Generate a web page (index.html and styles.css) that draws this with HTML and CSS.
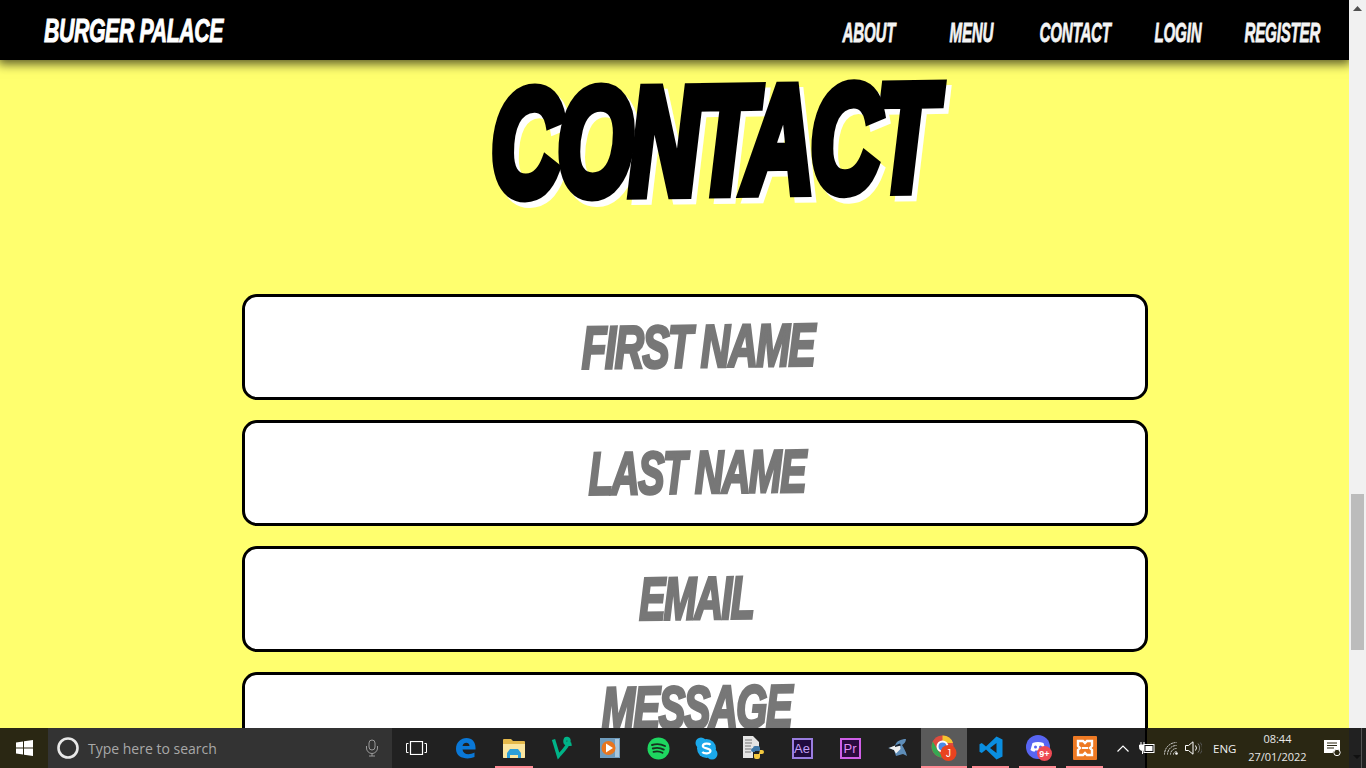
FILE: index.html
```html
<!DOCTYPE html>
<html lang="en">
<head>
<meta charset="utf-8">
<title>Burger Palace - Contact</title>
<link rel="stylesheet" href="styles.css">
</head>
<body>
<div class="desktop">
  <div class="browser">
    <div class="page">
      <header class="topbar">
        <a class="brand"><span class="brand-text">BURGER PALACE</span></a>
        <nav class="nav">
          <a class="nav-link nav-about"><span>ABOUT</span></a>
          <a class="nav-link nav-menu"><span>MENU</span></a>
          <a class="nav-link nav-contact"><span>CONTACT</span></a>
          <a class="nav-link nav-login"><span>LOGIN</span></a>
          <a class="nav-link nav-register"><span>REGISTER</span></a>
        </nav>
      </header>
      <main class="content">
        <h1 class="title"><span data-text="CONTACT">CONTACT</span></h1>
        <form class="form">
          <div class="field"><span class="hint hint-first">FIRST NAME</span></div>
          <div class="field"><span class="hint hint-last">LAST NAME</span></div>
          <div class="field"><span class="hint hint-email">EMAIL</span></div>
          <div class="field field-message"><span class="hint hint-message">MESSAGE</span></div>
        </form>
      </main>
    </div>
    <div class="scrollbar">
      <div class="scroll-arrow"><svg width="9" height="5" viewBox="0 0 9 5"><path d="M4.5 0 9 5H0z" fill="#505050"/></svg></div>
      <div class="scroll-track"><div class="scroll-thumb"></div></div>
    </div>
  </div>
  <footer class="taskbar">
    <div class="start">
      <svg width="17" height="16" viewBox="0 0 17 16"><path d="M0 2.4 7 1.4V7.5H0zM8 1.2 17 0V7.5H8zM0 8.5H7V14.6L0 13.6zM8 8.5H17V16L8 14.8z" fill="#fff"/></svg>
    </div>
    <div class="search">
      <svg class="cortana" width="24" height="24" viewBox="0 0 24 24"><circle cx="12" cy="12" r="9.5" fill="none" stroke="#e8e8e8" stroke-width="2.6"/></svg>
      <span class="search-text">Type here to search</span>
      <svg class="mic" width="14" height="18" viewBox="0 0 14 18"><rect x="4" y="1" width="6" height="10" rx="3" fill="none" stroke="#9a9a9a"/><path d="M1.5 7v2a5.5 5.5 0 0 0 11 0V7M7 14.500V17M4 17h6" fill="none" stroke="#9a9a9a"/></svg>
    </div>
    <div class="taskview">
      <svg width="21" height="14" viewBox="0 0 21 14"><rect x="4.500" y="0.500" width="12" height="13" fill="none" stroke="#fff" stroke-width="1.200"/><path d="M2.500 2.500H.5v9h2M18.500 2.500h2v9h-2" fill="none" stroke="#fff"/></svg>
    </div>
    <div class="apps">
      <div class="app"><svg width="20" height="22" viewBox="0 0 20 22"><path d="M0 12C0 5 5 1 10.500 1 16.500 1 20 5.500 19.500 12.500H6.500C7 17.500 13 18.500 18.500 15.500V20C11.500 23 0 21.500 0 12ZM6.500 9H13.500C13.500 5 7.500 4.500 6.500 9Z" fill="#0a78d7"/></svg></div>
      <div class="app running"><svg width="22" height="20" viewBox="0 0 22 20"><path d="M0 2a1 1 0 0 1 1-1h7l2 2h11a1 1 0 0 1 1 1v15a1 1 0 0 1-1 1H1a1 1 0 0 1-1-1z" fill="#e5b94b"/><path d="M0 6h22v13a1 1 0 0 1-1 1H1a1 1 0 0 1-1-1z" fill="#fbe6a0"/><path d="M4 15 7 11H15L18 15V20H15V17H7V20H4z" fill="#2d9fd9"/></svg></div>
      <div class="app"><svg width="22" height="24" viewBox="0 0 22 24"><path d="M2.500 3.500 7.500 20C12 15 18 9 18 5 18 2 14.500 1.500 14 4.500 13.500 8 16 9 20.500 8" fill="none" stroke="#00b488" stroke-width="3.400"/></svg></div>
      <div class="app"><svg width="20" height="20" viewBox="0 0 20 20"><rect width="20" height="20" fill="#6f9cbd"/><rect x="15" y="1" width="4" height="18" fill="#a9c7dc"/><circle cx="8.500" cy="10" r="7" fill="#e8761e"/><path d="M6 5.500 13 10 6 14.500z" fill="#fff"/></svg></div>
      <div class="app"><svg width="23" height="23" viewBox="0 0 23 23"><circle cx="11.500" cy="11.500" r="11" fill="#1ed760"/><path d="M5 8C9 6.700 14 7 18 9M5.800 11.500C9.500 10.500 13.500 10.800 16.800 12.600M6.500 14.800C9.800 14 12.800 14.200 15.500 15.800" fill="none" stroke="#17321f" stroke-width="1.900" stroke-linecap="round"/></svg></div>
      <div class="app"><svg width="23" height="23" viewBox="0 0 23 23"><circle cx="6" cy="6" r="5.500" fill="#1ba8ea"/><circle cx="17" cy="17" r="5.500" fill="#1ba8ea"/><circle cx="11.500" cy="11.500" r="9.500" fill="#1ba8ea"/><path d="M15.500 7.800C14 6.300 8 6 7.800 9 7.800 12 15.500 10.800 15.500 14 15.300 17 9 16.800 7.300 15" fill="none" stroke="#fff" stroke-width="2.200"/></svg></div>
      <div class="app"><svg width="24" height="24" viewBox="0 0 24 24"><path d="M1 0H11L17 6V14H11V22H1z" fill="#e4e4e4"/><path d="M3 4H10M3 7H10M3 10H9M3 13H9M3 16H9" stroke="#777" stroke-width="1.200"/><path d="M11 12a2 2 0 0 1 2-2h3a2 2 0 0 1 2 2v3h-5v1h-2a2 2 0 0 1 0-4z" fill="#3f78a8"/><path d="M18 14h2a2 2 0 0 1 2 2 2 2 0 0 1-2 2h-2v3a2 2 0 0 1-2 2h-2a2 2 0 0 1-2-2v-3h5z" fill="#f4c93f"/></svg></div>
      <div class="app"><div class="adobe adobe-ae"><span>Ae</span></div></div>
      <div class="app"><div class="adobe adobe-pr"><span>Pr</span></div></div>
      <div class="app app-jay"><svg width="22" height="20" viewBox="0 0 22 20"><path d="M19 1C14 1 9 3 8 8L1 10 7 12 9 18 16 16 20 18C19 13 16 9 15 7 17 6 19 4 19 1Z" fill="#5e8db8"/><path d="M2 10 8 7.500 13 7 13.500 11 9 15.500 7 12z" fill="#f2f2f2"/><path d="M8 7.500 13 5.500 14 7.500 8 9z" fill="#16202c"/></svg></div>
      <div class="app running active"><svg width="26" height="26" viewBox="0 0 26 26"><circle cx="11.500" cy="11.500" r="11" fill="#dd4b3e"/><path d="M11.500.5A11 11 0 0 1 22 8H11.500z" fill="#f4c430"/><path d="M1.800 6.500 7 15.500 12 22.500A11 11 0 0 1 1.800 6.500z" fill="#36a853"/><circle cx="11.500" cy="11.500" r="5" fill="#4a8be8" stroke="#fff" stroke-width="2"/><circle cx="17.500" cy="18" r="8" fill="#e8431f"/><text class="chrome-badge" x="17.500" y="21.500">J</text></svg></div>
      <div class="app running"><svg width="24" height="24" viewBox="0 0 24 24"><path d="M17.500 0.500 23.500 3.500V20.500L17.500 23.500 7 13.500 2.800 17 .5 15.800V8.200L2.800 7 7 10.500zM17.500 7 11 12 17.500 17z" fill="#0a8ee0"/></svg></div>
      <div class="app running app-discord"><svg width="27" height="26" viewBox="0 0 27 26"><circle cx="12" cy="12" r="12" fill="#5865f2"/><path d="M6.500 8C10 6.500 14 6.500 17.500 8L19.500 15C18 16 17 16.500 15.500 16.700L14.800 15.500H9.200L8.500 16.700C7 16.500 6 16 4.500 15Z" fill="#fff"/><circle cx="9.500" cy="12" r="1.500" fill="#5865f2"/><circle cx="14.500" cy="12" r="1.500" fill="#5865f2"/><circle cx="18.500" cy="18.500" r="7.500" fill="#ee4a54"/><text class="discord-badge" x="18.500" y="21.500">9+</text></svg></div>
      <div class="app running"><svg width="24" height="24" viewBox="0 0 24 24"><rect width="24" height="24" rx="1" fill="#ee7a24"/><path d="M5 5H10L12 7 14 5H19V10L17 12 19 14V19H14L12 17 10 19H5V14L7 12 5 10z" fill="none" stroke="#fff" stroke-width="2.400"/><path d="M9 12H15" stroke="#fff" stroke-width="2"/></svg></div>
    </div>
    <div class="chevron"><svg width="12" height="7" viewBox="0 0 12 7"><path d="M.5 6.500 6 1l5.500 5.500" fill="none" stroke="#fff" stroke-width="1.200"/></svg></div>
    <div class="tray">
      <svg class="tray-power" width="17" height="12" viewBox="0 0 17 12"><path d="M3 0v3M6 0v3M1.500 3h6v2.500a3 3 0 0 1-6 0zM4.500 8.500V12" stroke="#fff" fill="#fff" stroke-width="1"/><rect x="6" y="2.500" width="10" height="8" fill="#111" stroke="#fff"/><rect x="7.500" y="4" width="7" height="5" fill="#fff"/></svg>
      <svg class="tray-wifi" width="15" height="13" viewBox="0 0 15 13"><path d="M.5 12.500A12 12 0 0 1 12.500 .5M3.500 12.500A9 9 0 0 1 12.500 3.500M6.500 12.500A6 6 0 0 1 12.500 6.500M9.500 12.500A3 3 0 0 1 12.500 9.500" fill="none" stroke="#d8d8d8" stroke-dasharray="2 .6"/><circle cx="12.500" cy="11.500" r="1.300" fill="#fff"/></svg>
      <svg class="tray-sound" width="17" height="14" viewBox="0 0 17 14"><path d="M.5 4.500H3.500L8 .8V13.200L3.500 9.500H.5z" fill="none" stroke="#fff"/><path d="M10.500 4.500A4 4 0 0 1 10.500 9.500" fill="none" stroke="#fff"/><path d="M13 2.500A7 7 0 0 1 13 11.500" fill="none" stroke="#888"/><path d="M15.300 1.500A9 9 0 0 1 15.300 12.500" fill="none" stroke="#555"/></svg>
      <span class="tray-lang">ENG</span>
      <div class="clock"><span>08:44</span><span>27/01/2022</span></div>
      <svg class="tray-notify" width="17" height="16" viewBox="0 0 17 16"><path d="M0 0H16V11H10L8.500 13H0z" fill="#fff"/><path d="M3 3H13M3 5.500H13M3 8H10" stroke="#2a2713"/><circle cx="13" cy="12.500" r="3.200" fill="#2a2713" stroke="#fff"/></svg>
    </div>
    <div class="tray-end"><div class="tray-arrow"></div></div>
  </footer>
</div>
</body>
</html>
```
FILE: styles.css
```css
* { box-sizing: border-box; }
html, body { margin: 0; height: 100%; overflow: hidden; }
.desktop { width: 1366px; height: 768px; display: flex; flex-direction: column; font-family: "Liberation Sans", Arial, sans-serif; }
.browser { height: 728px; display: flex; }
.page { width: 1349px; background: #ffff6e; overflow: hidden; position: relative; }

.topbar { height: 60px; background: #000; box-shadow: 0 2px 10px 2px rgba(0,0,0,.65); display: flex; align-items: center; justify-content: space-between; position: relative; z-index: 2; padding: 3px 0 0 44px; }
.brand, .nav-link { color: #fff; font-family: "Liberation Sans", sans-serif; font-weight: 700; font-style: italic; }
.brand-text { display: block; font-size: 33px; letter-spacing: -.6px; transform: scaleX(.645) translateY(-1px); transform-origin: left center; width: 180px; white-space: nowrap; -webkit-text-stroke: 1px #fff; }
.nav { display: flex; align-items: center; height: 100%; }
.nav-link { display: block; font-size: 28px; white-space: nowrap; color: #f4f4f4; }
.nav-link span { display: block; transform: scaleX(.54) translate(1px, 1px); transform-origin: left center; letter-spacing: -.4px; -webkit-text-stroke: .8px #f4f4f4; }
.nav-about { width: 107px; }
.nav-menu { width: 90px; }
.nav-contact { width: 115px; }
.nav-login { width: 90px; }
.nav-register { width: 105px; }

.content { display: flex; flex-direction: column; align-items: center; }
.title { margin: 0; height: 234px; width: 100%; text-align: center; font-family: "Liberation Sans", sans-serif; font-size: 164px; line-height: 164px; font-weight: 700; font-style: italic; color: #000; letter-spacing: -6px; white-space: nowrap; }
.title span { display: inline-block; position: relative; isolation: isolate; transform: translate(37px, -1px) scale(.59, .92) rotate(-.5deg); -webkit-text-stroke: 13px #000; }
.title span::before { content: attr(data-text); position: absolute; left: 8px; top: 6px; z-index: -1; color: #fff; -webkit-text-stroke: 13px #fff; }

.form { width: 906px; display: flex; flex-direction: column; gap: 20px; margin-left: 41px; }
.field { height: 106px; flex: none; background: #fff; border: 3px solid #000; border-radius: 15px; display: flex; justify-content: center; align-items: center; padding-left: 6px; }
.field-message { align-items: flex-start; }
.hint { display: block; white-space: nowrap; font-family: "Liberation Sans", sans-serif; font-size: 60px; line-height: 60px; font-weight: 700; font-style: italic; color: #777; letter-spacing: -2.500px; -webkit-text-stroke: 3px #777; transform: scaleX(.68) rotate(-.5deg); }
.hint-last { transform: translateX(-1px) scaleX(.66) rotate(-.5deg); }
.hint-email { transform: translateX(-2px) scaleX(.655) rotate(-.5deg); }
.hint-message { margin-top: 3px; transform: translateX(-2px) scaleX(.67) rotate(-.5deg); }

.scrollbar { width: 17px; background: #f1f1f1; display: flex; flex-direction: column; }
.scroll-arrow { height: 17px; display: flex; align-items: center; justify-content: center; }
.scroll-track { flex: 1; padding: 477px 2px 0; }
.scroll-thumb { height: 156px; background: #bcbcbc; }

.taskbar { height: 40px; background: #212121; display: flex; align-items: stretch; color: #fff; }
.start { width: 48px; background: #2a2713; display: flex; align-items: center; justify-content: center; flex: none; }
.search { width: 344px; background: #333; display: flex; align-items: center; padding: 0 13px 0 8px; flex: none; }
.cortana { flex: none; }
.search-text { margin-left: 8px; font-size: 14px; font-family: "Open Sans", "Liberation Sans", sans-serif; color: #a8a8a8; flex: 1; }
.taskview { width: 48px; display: flex; align-items: center; justify-content: center; flex: none; }
.apps { display: flex; flex: none; margin-left: 2px; }
.app { width: 48px; position: relative; display: flex; align-items: center; justify-content: center; }
.app-jay { width: 47px; }
.active { width: 46px; background: #5a5a5a; }
.active ~ .app { width: 47px; }
.app-discord svg { margin-left: 3px; }
.running::after { content: ""; position: absolute; left: 5px; right: 5px; bottom: 0; height: 2px; background: #ff8a94; }
.active::after { left: 0; right: 0; }
.adobe { width: 21px; height: 21px; border: 2px solid; display: flex; align-items: center; justify-content: center; font-size: 13px; font-family: "Liberation Sans", sans-serif; }
.adobe-ae { background: #1f0a3d; border-color: #9a7de0; color: #c4a0f5; }
.adobe-pr { background: #2a0a3d; border-color: #d060e8; color: #e08cf5; }
.chrome-badge { font: 400 10px "Liberation Sans", sans-serif; fill: #fff; text-anchor: middle; }
.discord-badge { font: 700 9px "Liberation Sans", sans-serif; fill: #fff; text-anchor: middle; }
.chevron { width: 37px; display: flex; align-items: center; justify-content: center; flex: none; padding-right: 7px; }
.tray { width: 204px; flex: none; background: #2a2713; display: flex; align-items: center; border-left: 2px solid #000; }
.tray-power { margin-left: -9px; }
.tray-wifi { margin-left: 9px; }
.tray-sound { margin-left: 6px; }
.tray-lang { margin-left: 11px; font-size: 11.500px; font-family: "Open Sans", sans-serif; color: #f0f0f0; }
.clock { margin-left: 11px; width: 60px; flex: none; display: flex; flex-direction: column; align-items: center; font-size: 11px; line-height: 18px; font-family: "Open Sans", sans-serif; color: #e8e8e8; }
.tray-notify { margin-left: 17px; }
.tray-end { flex: 1; position: relative; border-right: 5px solid #212121; }
.tray-end::after { content: ""; position: absolute; right: -1px; top: 0; bottom: 0; width: 1px; background: #555; }
.tray-arrow { position: absolute; left: 4px; bottom: 5px; border: 4px solid transparent; border-top-color: #111; }
```
